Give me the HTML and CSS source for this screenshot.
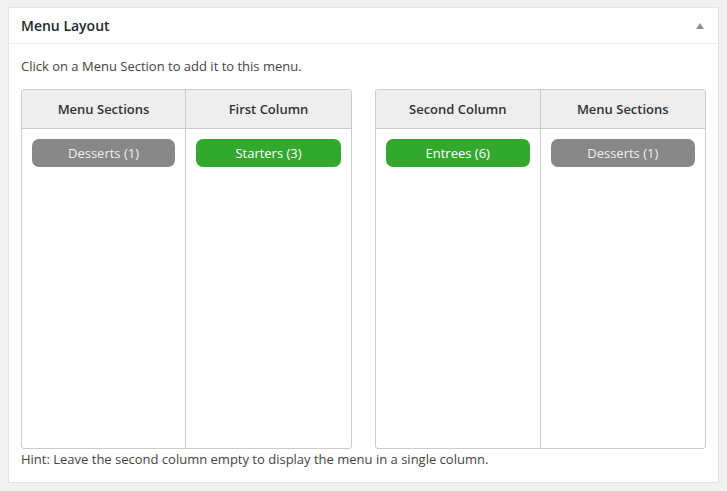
FILE: index.html
```html
<!DOCTYPE html>
<html>
<head>
<meta charset="utf-8">
<link rel="stylesheet" href="styles.css">
</head>
<body>
<div class="postbox">
  <div class="hndle">
    <h2 class="title">Menu Layout</h2>
    <span class="toggle"></span>
  </div>
  <div class="inside">
    <p class="intro">Click on a Menu Section to add it to this menu.</p>
    <div class="tables">
      <div class="table table-left">
        <div class="col">
          <div class="col-head">Menu Sections</div>
          <div class="col-body"><div class="item item-grey">Desserts (1)</div></div>
        </div>
        <div class="col">
          <div class="col-head">First Column</div>
          <div class="col-body"><div class="item item-green">Starters (3)</div></div>
        </div>
      </div>
      <div class="table">
        <div class="col">
          <div class="col-head">Second Column</div>
          <div class="col-body"><div class="item item-green">Entrees (6)</div></div>
        </div>
        <div class="col">
          <div class="col-head">Menu Sections</div>
          <div class="col-body"><div class="item item-grey">Desserts (1)</div></div>
        </div>
      </div>
    </div>
    <p class="hint">Hint: Leave the second column empty to display the menu in a single column.</p>
  </div>
</div>
</body>
</html>
```
FILE: styles.css
```css
html, body {
  margin: 0;
  padding: 0;
}
body {
  background: #f1f1f1;
  font-family: "Open Sans", "Noto Sans", sans-serif;
  color: #444;
  padding: 7px 8px 0 8px;
}
.postbox {
  width: 711px;
  box-sizing: border-box;
  background: #fff;
  border: 1px solid #e5e5e5;
  box-shadow: 0 1px 1px rgba(0,0,0,0.04);
}
.hndle {
  height: 35px;
  border-bottom: 1px solid #eee;
  display: flex;
  align-items: center;
  justify-content: space-between;
  padding: 0 12px;
}
.title {
  margin: 0;
  font-size: 14px;
  font-weight: 600;
  color: #23282d;
  line-height: 1.4;
}
.toggle {
  width: 0;
  height: 0;
  border-left: 4px solid transparent;
  border-right: 4px solid transparent;
  border-bottom: 6px solid #8a8f94;
  margin-right: 2px;
  margin-top: 1px;
}
.inside {
  padding: 0 12px 13px;
}
.intro {
  margin: 12px 0 13px;
  font-size: 13px;
  line-height: 20px;
}
.tables {
  display: flex;
  justify-content: space-between;
}
.table {
  width: 331px;
  height: 360px;
  box-sizing: border-box;
  border: 1px solid #ccc;
  border-radius: 3px;
  display: grid;
  grid-template-columns: 1fr 1fr;
  overflow: hidden;
}
.table-left {
  grid-template-columns: 164px 1fr;
}
.col {
  display: flex;
  flex-direction: column;
}
.col:first-child {
  border-right: 1px solid #ccc;
}
.col-head {
  height: 38px;
  border-bottom: 1px solid #ccc;
  background: #eee;
  display: flex;
  align-items: center;
  justify-content: center;
  font-size: 13px;
  font-weight: 600;
  color: #333;
}
.col-body {
  flex: 1;
  padding: 10px 10px 0;
}
.item {
  height: 28px;
  border-radius: 7px;
  display: flex;
  align-items: center;
  justify-content: center;
  font-size: 13px;
  color: #eee;
}
.item-grey {
  background: #888;
}
.item-green {
  background: #32a82d;
  color: #fff;
}
.hint {
  margin: 0;
  font-size: 13px;
  line-height: 20px;
}
```
